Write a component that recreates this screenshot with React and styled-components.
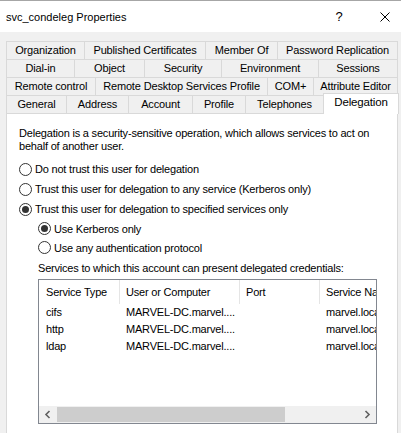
import React from 'react';
import styled, { createGlobalStyle } from 'styled-components';

const GlobalStyle = createGlobalStyle`
  html, body {
    margin: 0;
    padding: 0;
    background: #f0f0f0;
  }
  body {
    font-family: "Liberation Sans", Arial, sans-serif;
    color: #000;
  }
`;

const Window = styled.div`
  width: 401px;
  height: 433px;
  overflow: hidden;
  background: #f0f0f0;
`;

const TitleBar = styled.div`
  height: 31px;
  border-top: 1px solid #a6a6a6;
  background: #fff;
  display: flex;
  align-items: center;
`;

const Title = styled.div`
  flex: 1;
  padding-left: 6px;
  font-size: 11px;
`;

const CaptionButton = styled.div`
  width: ${(p) => p.$w}px;
  height: 31px;
  box-sizing: border-box;
  padding-left: ${(p) => p.$pl || 0}px;
  display: flex;
  align-items: center;
  justify-content: center;
  font-size: 13px;
  flex-shrink: 0;
`;

const Tabs = styled.div`
  margin: 9px 0 0 6px;
  width: 392px;
`;

const TabRow = styled.div`
  display: flex;
  align-items: flex-start;
  height: 17px;
  border-top: 1px solid #d9d9d9;
  border-left: 1px solid #d9d9d9;
`;

const Tab = styled.div`
  box-sizing: border-box;
  width: ${(p) => p.$w}px;
  height: 17px;
  flex-shrink: 0;
  border-right: 1px solid #d9d9d9;
  text-align: center;
  line-height: 17px;
  font-size: 11px;
  letter-spacing: -0.15px;
  white-space: nowrap;
`;

const ActiveTab = styled(Tab)`
  position: relative;
  z-index: 1;
  height: 21px;
  margin-top: -3px;
  margin-left: -1px;
  border: 1px solid #d9d9d9;
  border-bottom: none;
  background: #fff;
  font-size: 11.5px;
`;

const Panel = styled.div`
  margin-left: 6px;
  width: 392px;
  height: 400px;
  box-sizing: border-box;
  border: 1px solid #d9d9d9;
  background: #fff;
  padding: 13px 12px;
  font-size: 11px;
  letter-spacing: -0.2px;
`;

const Intro = styled.p`
  margin: 0;
  max-width: 362px;
  line-height: 13px;
`;

const RadioList = styled.div`
  margin-top: 6px;
`;

const RadioRow = styled.div`
  display: flex;
  align-items: center;
  height: ${(p) => p.$h}px;
  margin-left: ${(p) => p.$indent || 0}px;
`;

const RadioCircle = styled.span`
  width: 13px;
  height: 13px;
  box-sizing: border-box;
  border: 1px solid #333;
  border-radius: 50%;
  background: #fff;
  flex-shrink: 0;
  display: flex;
  align-items: center;
  justify-content: center;

  &::after {
    content: '';
    display: ${(p) => (p.$checked ? 'block' : 'none')};
    width: 7px;
    height: 7px;
    border-radius: 50%;
    background: #333;
  }
`;

const RadioLabel = styled.span`
  margin-left: 3px;
  white-space: nowrap;
`;

const ServicesLabel = styled.div`
  margin: 5px 0 0 19px;
  line-height: 13px;
`;

const ListBox = styled.div`
  margin: 4px 0 0 19px;
  width: 339px;
  height: 145px;
  box-sizing: border-box;
  border: 1px solid #828790;
  background: #fff;
  display: flex;
  flex-direction: column;
  overflow: hidden;
`;

const ListRow = styled.div`
  display: flex;
  flex-shrink: 0;
  height: ${(p) => p.$h}px;
  padding-left: 1px;
`;

const Cell = styled.div`
  box-sizing: border-box;
  width: ${(p) => p.$w}px;
  flex-shrink: 0;
  padding-left: 6px;
  line-height: ${(p) => p.$h}px;
  white-space: nowrap;
  overflow: hidden;
  border-right: ${(p) => (p.$divider ? '1px solid #e5e5e5' : 'none')};
`;

const Filler = styled.div`
  flex: 1;
`;

const ScrollBar = styled.div`
  height: 17px;
  flex-shrink: 0;
  display: flex;
  background: #f0f0f0;
`;

const ScrollArrow = styled.div`
  width: 17px;
  flex-shrink: 0;
  display: flex;
  align-items: center;
  justify-content: center;
`;

const Thumb = styled.div`
  width: 228px;
  margin: 1px 0 1px 1px;
  background: #cdcdcd;
`;

const tabRows = [
  [['Organization', 78], ['Published Certificates', 121], ['Member Of', 72], ['Password Replication', 120]],
  [['Dial-in', 68], ['Object', 70], ['Security', 77], ['Environment', 97], ['Sessions', 79]],
  [['Remote control', 89], ['Remote Desktop Services Profile', 172], ['COM+', 46], ['Attribute Editor', 84]],
];

const frontRow = [['General', 60], ['Address', 62], ['Account', 64], ['Profile', 53], ['Telephones', 78]];

const columns = [['Service Type', 80], ['User or Computer', 120], ['Port', 80], ['Service Name', 120]];

const services = [
  ['cifs', 'MARVEL-DC.marvel....', '', 'marvel.local'],
  ['http', 'MARVEL-DC.marvel....', '', 'marvel.local'],
  ['ldap', 'MARVEL-DC.marvel....', '', 'marvel.local'],
];

const Chevron = ({ right }) => (
  <svg width="7" height="9" viewBox="0 0 7 9">
    <path
      d={right ? 'M1.5 1 L5 4.5 L1.5 8' : 'M5.5 1 L2 4.5 L5.5 8'}
      fill="none"
      stroke="#606060"
      strokeWidth="1.6"
    />
  </svg>
);

const Radio = ({ checked, label, h, indent }) => (
  <RadioRow $h={h} $indent={indent}>
    <RadioCircle $checked={checked} />
    <RadioLabel>{label}</RadioLabel>
  </RadioRow>
);

const App = () => {
  return (
    <>
      <GlobalStyle />
      <Window>
        <TitleBar>
          <Title>svc_condeleg Properties</Title>
          <CaptionButton $w={46}>?</CaptionButton>
          <CaptionButton $w={39} $pl={7}>
            <svg width="10" height="10" viewBox="0 0 10 10">
              <path d="M0.5 0.5 L9.5 9.5 M9.5 0.5 L0.5 9.5" stroke="#000" strokeWidth="1" />
            </svg>
          </CaptionButton>
        </TitleBar>

        {/* tab strip, back rows first */}
        <Tabs>
          {tabRows.map((row, i) => (
            <TabRow key={i}>
              {row.map(([label, w]) => (
                <Tab key={label} $w={w}>{label}</Tab>
              ))}
            </TabRow>
          ))}
          <TabRow>
            {frontRow.map(([label, w]) => (
              <Tab key={label} $w={w}>{label}</Tab>
            ))}
            <ActiveTab $w={76}>Delegation</ActiveTab>
          </TabRow>
        </Tabs>

        <Panel>
          <Intro>
            Delegation is a security-sensitive operation, which allows services to act on behalf of
            another user.
          </Intro>

          <RadioList>
            <Radio h={20} label="Do not trust this user for delegation" />
            <Radio h={20} label="Trust this user for delegation to any service (Kerberos only)" />
            <Radio h={20} checked label="Trust this user for delegation to specified services only" />
            <Radio h={19} indent={19} checked label="Use Kerberos only" />
            <Radio h={19} indent={19} label="Use any authentication protocol" />
          </RadioList>

          <ServicesLabel>Services to which this account can present delegated credentials:</ServicesLabel>

          <ListBox>
            <ListRow $h={24}>
              {columns.map(([name, w], i) => (
                <Cell key={name} $w={w} $h={24} $divider={i < 3}>{name}</Cell>
              ))}
            </ListRow>
            {services.map((s) => (
              <ListRow key={s[0]} $h={17}>
                {s.map((v, i) => (
                  <Cell key={i} $w={columns[i][1]} $h={17}>{v}</Cell>
                ))}
              </ListRow>
            ))}
            <Filler />
            <ScrollBar>
              <ScrollArrow><Chevron /></ScrollArrow>
              <Thumb />
              <Filler />
              <ScrollArrow><Chevron right /></ScrollArrow>
            </ScrollBar>
          </ListBox>
        </Panel>
      </Window>
    </>
  );
};

export default App;
